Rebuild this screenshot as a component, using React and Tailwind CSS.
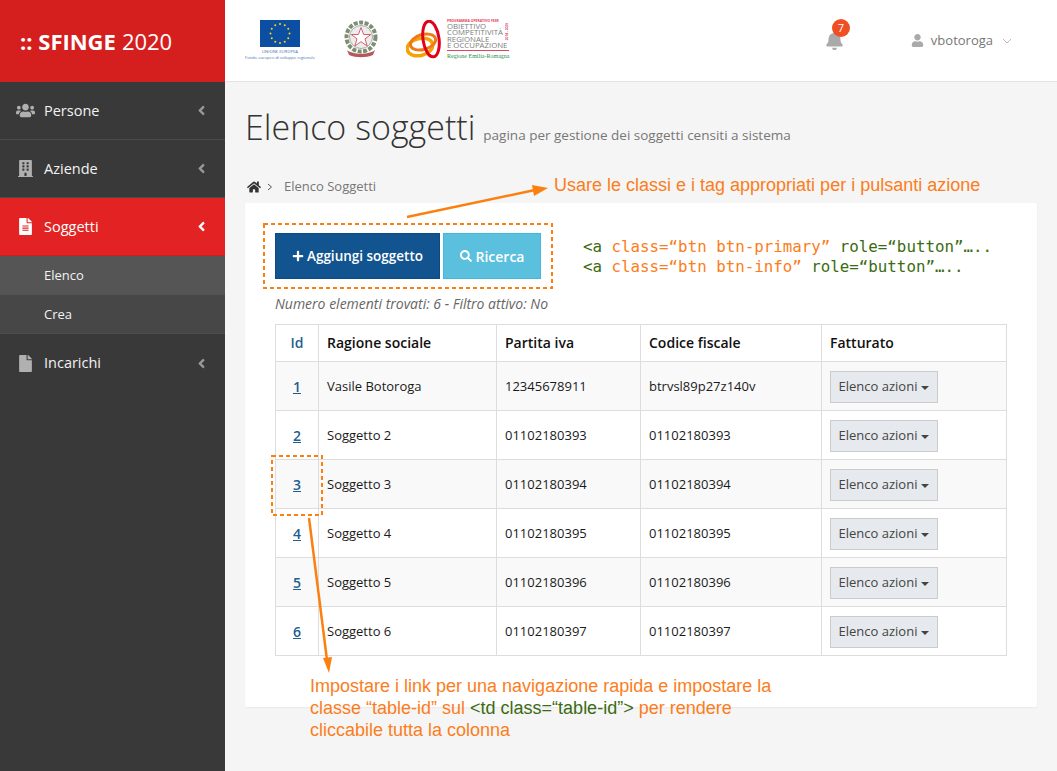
import { FaUsers, FaBuilding, FaFileAlt, FaFile, FaHome, FaBell, FaUser, FaPlus, FaSearch, FaAngleLeft } from 'react-icons/fa';

const navItems = [
  { label: 'Persone', icon: FaUsers, iconClass: 'text-[19px] -ml-[1px]' },
  { label: 'Aziende', icon: FaBuilding, iconClass: 'text-[17px]' },
  { label: 'Soggetti', icon: FaFileAlt, iconClass: 'text-[17px]', active: true },
];

const rows = [
  ['1', 'Vasile Botoroga', '12345678911', 'btrvsl89p27z140v'],
  ['2', 'Soggetto 2', '01102180393', '01102180393'],
  ['3', 'Soggetto 3', '01102180394', '01102180394'],
  ['4', 'Soggetto 4', '01102180395', '01102180395'],
  ['5', 'Soggetto 5', '01102180396', '01102180396'],
  ['6', 'Soggetto 6', '01102180397', '01102180397'],
];

const NavItem = ({ label, icon: Icon, iconClass, active, last }) => (
  <div className={`flex items-center h-[58px] pl-[17px] pr-[16px] ${last ? '' : 'border-b'} ${active ? 'bg-[#e32323] border-[#c92020] text-white' : 'border-[#4c4c4c] text-[#f2f2f2]'}`}>
    <span className="w-[27px] shrink-0">
      <Icon className={`${iconClass} ${active ? 'text-white' : 'text-[#b0b0b0]'}`} />
    </span>
    <span className="flex-1 text-[14.5px]">{label}</span>
    <FaAngleLeft className={`text-[15px] ${active ? 'text-white' : 'text-[#999999]'}`} />
  </div>
);

const Logos = () => (
  <div className="flex items-center ml-5 -mt-[2px]">
    {/* fondo europeo */}
    <div className="w-[70px] flex flex-col items-center">
      <svg width="40" height="27" viewBox="0 0 40 27">
        <rect width="40" height="27" fill="#0b4ea2" />
        {[...Array(12)].map((_, i) => {
          const a = (i * Math.PI) / 6;
          return <circle key={i} cx={20 + 9.5 * Math.cos(a)} cy={13.5 + 9.5 * Math.sin(a)} r="1" fill="#ffd617" />;
        })}
      </svg>
      <span className="mt-[2px] text-[4.2px] leading-[6px] text-[#3f6fb0] whitespace-nowrap">UNIONE EUROPEA</span>
      <span className="text-[4.1px] leading-[5px] text-[#3f6fb0] whitespace-nowrap">Fondo europeo di sviluppo regionale</span>
    </div>
    {/* emblema */}
    <svg className="ml-[29px]" width="34" height="39" viewBox="0 0 34 39">
      <circle cx="17" cy="17" r="14.5" fill="none" stroke="#7d8f72" strokeWidth="4" strokeDasharray="4 1.5" />
      <circle cx="17" cy="17" r="11.5" fill="#ececec" stroke="#a8a8a8" strokeWidth="1" />
      <path d="M17 7.5l2.6 7h7.2l-5.8 4.4 2.2 7.1-6.2-4.3-6.2 4.3 2.2-7.1-5.8-4.4h7.2z" fill="#fff" stroke="#d0636a" strokeWidth="1" />
      <path d="M3 30c6 5 22 5 28 0l-2 5c-7 3-17 3-24 0z" fill="#b5595a" />
    </svg>
    {/* programma operativo */}
    <svg className="ml-[28px]" width="36" height="40" viewBox="0 0 36 40">
      <ellipse cx="14" cy="27" rx="13" ry="8.5" transform="rotate(-14 14 27)" fill="none" stroke="#f5a300" strokeWidth="3.5" />
      <ellipse cx="17" cy="22" rx="13" ry="7.5" transform="rotate(-16 17 22)" fill="none" stroke="#ee7a1c" strokeWidth="3" />
      <ellipse cx="25" cy="19" rx="8" ry="18" transform="rotate(-8 25 19)" fill="none" stroke="#e2001a" strokeWidth="3" />
    </svg>
    <div className="relative ml-[5px] flex flex-col w-[62px] text-[#7c7c7c]">
      <span className="text-[3.4px] leading-[4px] font-bold text-[#e2445c] whitespace-nowrap">PROGRAMMA OPERATIVO FESR</span>
      {['OBIETTIVO', 'COMPETITIVITÀ', 'REGIONALE', 'E OCCUPAZIONE'].map((t) => (
        <span key={t} className="text-[7.8px] leading-[6.3px] whitespace-nowrap">{t}</span>
      ))}
      <span className="mt-[2px] h-[1px] bg-[#e2445c]" />
      <div className="mt-[1px] flex items-center">
        <svg width="8" height="7" viewBox="0 0 8 7"><path d="M0 0h8v7H0z" fill="#cfe8d6" /><path d="M0 0l8 7H0z" fill="#2f8f4e" /></svg>
        <span className="text-[6px] leading-[8px] text-[#2f8f4e] whitespace-nowrap font-['Liberation_Serif',serif]">Regione Emilia-Romagna</span>
      </div>
      <span className="absolute right-0 top-[4px] text-[3.2px] leading-[4px] font-bold text-[#e2445c] [writing-mode:vertical-rl] rotate-180">2014 - 2020</span>
    </div>
  </div>
);

const App = () => {
  return (
    <div className="relative flex w-[1057px] h-[771px] overflow-hidden bg-[#f5f5f5] font-['Open_Sans',sans-serif]">
      <aside className="w-[225px] shrink-0 bg-[#393939] flex flex-col">
        <div className="h-[82px] bg-[#d51f1f] flex items-center pl-5 text-white text-[22px]">
          <span className="font-bold">:: SFINGE</span>
          <span className="ml-[6px]">2020</span>
        </div>
        {navItems.map((item) => (
          <NavItem key={item.label} {...item} />
        ))}
        <div className="text-[13px] text-[#f2f2f2]">
          <div className="h-[39px] bg-[#555555] flex items-center pl-[44px]">Elenco</div>
          <div className="h-[39px] pt-[1px] bg-[#474747] border-b border-[#4c4c4c] flex items-center pl-[44px]">Crea</div>
        </div>
        <NavItem label="Incarichi" icon={FaFile} iconClass="text-[17px]" last />
      </aside>

      <div className="flex-1 min-w-0 flex flex-col">
        <header className="h-[82px] bg-white border-b border-[#e4e4e4] flex items-center shrink-0">
          <Logos />
          <div className="ml-auto flex items-center">
            <div className="relative">
              <FaBell className="text-[19px] text-[#aaaaaa]" />
              <span className="absolute -top-[12px] left-[7px] w-[18px] h-[18px] rounded-full bg-[#f04e23] text-white text-[11px] flex items-center justify-center">7</span>
            </div>
            <FaUser className="ml-[67px] text-[13px] text-[#aaaaaa]" />
            <span className="ml-[7px] text-[13px] text-[#777777]">vbotoroga</span>
            <svg className="ml-[9px] mr-[45px]" width="10" height="6" viewBox="0 0 10 6" fill="none">
              <path d="M1 1l4 4 4-4" stroke="#bbbbbb" strokeWidth="1" />
            </svg>
          </div>
        </header>

        <main className="flex-1 px-5">
          <div className="flex items-baseline mt-[20px]">
            <h1 className="text-[34px] leading-[50px] font-light text-[#333333]">Elenco soggetti</h1>
            <span className="ml-[8px] text-[13.5px] text-[#777777]">pagina per gestione dei soggetti censiti a sistema</span>
          </div>
          <div className="flex items-center mt-[26px] h-[18px] text-[13px] text-[#777777] pl-[2px]">
            <FaHome className="text-[14px] text-[#333333]" />
            <svg className="ml-[6px]" width="6" height="8" viewBox="0 0 6 8" fill="none">
              <path d="M1 1l3.5 3L1 7" stroke="#555555" strokeWidth="1" />
            </svg>
            <span className="ml-[11px]">Elenco Soggetti</span>
          </div>

          <section className="mt-[7px] h-[504px] bg-white rounded-[2px] shadow-[0_1px_2px_rgba(0,0,0,0.05)] px-[30px] pt-[30px]">
            <div className="flex items-start">
              <button className="w-[165px] h-[46px] bg-[#12548f] border border-[#0f4a7e] text-white text-[13.5px] font-semibold flex items-center justify-center">
                <FaPlus className="text-[12px] mr-[3px]" />
                Aggiungi soggetto
              </button>
              <button className="ml-[3px] w-[98px] h-[46px] bg-[#5bc0de] border border-[#46b8da] text-white text-[14px] font-semibold flex items-center justify-center">
                <FaSearch className="text-[12px] mr-[4px]" />
                Ricerca
              </button>
              <div className="ml-[42px] mt-[4px] font-['DejaVu_Sans_Mono',monospace] text-[15.8px] leading-[20px] text-[#3a6b12] whitespace-pre">
                <div>{'<a '}<span className="text-[#fb7d20]">class=“btn btn-primary”</span>{' role=“button”…..'}</div>
                <div>{'<a '}<span className="text-[#fb7d20]">class=“btn btn-info”</span>{' role=“button”…..'}</div>
              </div>
            </div>
            <p className="mt-[16px] text-[14px] leading-[18px] italic text-[#666666]">Numero elementi trovati: 6 - Filtro attivo: No</p>

            <table className="mt-[11px] w-[731px] table-fixed border-collapse text-[13px] text-[#1a1a1a]">
              <colgroup>
                <col className="w-[43px]" />
                <col className="w-[178px]" />
                <col className="w-[144px]" />
                <col className="w-[181px]" />
                <col className="w-[185px]" />
              </colgroup>
              <thead>
                <tr className="h-[37px] text-[14px] font-semibold text-left text-[#111111]">
                  <th className="border border-[#dddddd] pb-[2px] text-center font-semibold text-[#1f5f8f]">Id</th>
                  <th className="border border-[#dddddd] px-2 pb-[2px] font-semibold">Ragione sociale</th>
                  <th className="border border-[#dddddd] px-2 pb-[2px] font-semibold">Partita iva</th>
                  <th className="border border-[#dddddd] px-2 pb-[2px] font-semibold">Codice fiscale</th>
                  <th className="border border-[#dddddd] px-2 pb-[2px] font-semibold">Fatturato</th>
                </tr>
              </thead>
              <tbody>
                {rows.map((row, i) => (
                  <tr key={row[0]} className={`h-[49px] ${i % 2 === 0 ? 'bg-[#f9f9f9]' : 'bg-white'}`}>
                    <td className="border border-[#dddddd] text-center text-[14px] font-semibold text-[#1f5f8f] underline">{row[0]}</td>
                    <td className="border border-[#dddddd] px-2 pt-[2px]">{row[1]}</td>
                    <td className="border border-[#dddddd] px-2 pt-[2px]">{row[2]}</td>
                    <td className="border border-[#dddddd] px-2 pt-[2px]">{row[3]}</td>
                    <td className="border border-[#dddddd] px-2 pt-[2px]">
                      <button className="w-[108px] h-[32px] bg-[#e6eaee] border border-[#cccccc] text-[13px] text-[#444444] flex items-center justify-center">
                        Elenco azioni
                        <span className="ml-[4px] mt-[2px] border-x-[4px] border-x-transparent border-t-[4px] border-t-[#444444]" />
                      </button>
                    </td>
                  </tr>
                ))}
              </tbody>
            </table>
          </section>
        </main>
      </div>

      {/* note arancioni sopra la pagina */}
      <svg className="absolute inset-0 pointer-events-none" width="1057" height="771" viewBox="0 0 1057 771" fill="none">
        <rect x="264" y="224" width="288" height="64" stroke="#fb8010" strokeWidth="2" strokeDasharray="4 3" />
        <rect x="272" y="456" width="50" height="59" stroke="#fb8010" strokeWidth="2" strokeDasharray="4 3" />
        <path d="M407 217L535 190" stroke="#fb8010" strokeWidth="2.5" />
        <path d="M548 188L534 196L532 185Z" fill="#fb8010" />
        <path d="M309 518L327 660" stroke="#fb8010" strokeWidth="2.5" />
        <path d="M329 673L323 658L332 657Z" fill="#fb8010" />
      </svg>
      <div className="absolute left-[554px] top-[175px] text-[18px] leading-[20px] text-[#fb7d20] font-['Liberation_Sans',sans-serif] whitespace-nowrap">
        Usare le classi e i tag appropriati per i pulsanti azione
      </div>
      <div className="absolute left-[310px] top-[675px] text-[18px] leading-[22px] text-[#fb7d20] font-['Liberation_Sans',sans-serif] whitespace-nowrap">
        <div>Impostare i link per una navigazione rapida e impostare la</div>
        <div>classe “table-id” sul <span className="text-[#3a6b12]">{'<td class=“table-id”>'}</span> per rendere</div>
        <div>cliccabile tutta la colonna</div>
      </div>
    </div>
  );
};

export default App;
